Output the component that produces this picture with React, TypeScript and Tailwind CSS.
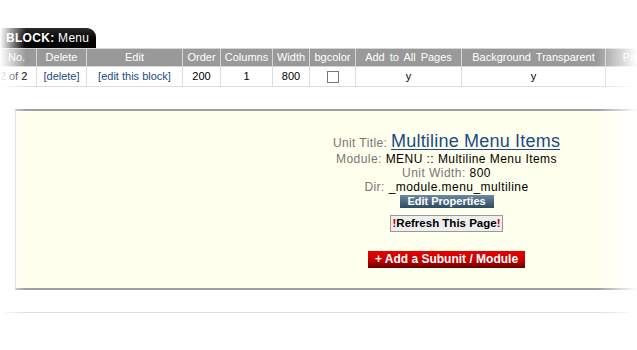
export default function App() {
  const cols = [
    { label: 'No.', w: 40 },
    { label: 'Delete', w: 50 },
    { label: 'Edit', w: 96 },
    { label: 'Order', w: 38 },
    { label: 'Columns', w: 52 },
    { label: 'Width', w: 37 },
    { label: 'bgcolor', w: 46 },
    { label: 'Add to All Pages', w: 106 },
    { label: 'Background Transparent', w: 144 },
    { label: 'Page', w: 60 },
  ];

  return (
    <div className="relative w-[637px] h-[350px] overflow-hidden bg-white font-['Liberation_Sans',Arial,sans-serif]">
      <div className="pt-[28px]">
        {/* block tab */}
        <div className="w-[96px] h-[20px] rounded-tr-[9px] bg-gradient-to-b from-[#2a2a2a] to-black text-white text-[12px] leading-[20px] pl-[6px] tracking-[0.3px]">
          <span className="font-bold">BLOCK:</span> Menu
        </div>

        <table className="ml-[-4px] border-collapse text-[11px] table-fixed w-[669px]">
          <colgroup>
            {cols.map((c) => (
              <col key={c.label} style={{ width: c.w }} />
            ))}
          </colgroup>
          <thead>
            <tr className="h-[18px] bg-[#999999] text-white">
              {cols.map((c) => (
                <th
                  key={c.label}
                  className="font-normal border border-[#d6d6d6] px-0 whitespace-nowrap overflow-hidden [word-spacing:2px]"
                >
                  {c.label}
                </th>
              ))}
            </tr>
          </thead>
          <tbody>
            <tr className="h-[20px] text-center text-black">
              <td className="border border-[#dddddd] pr-[6px]">2 of 2</td>
              <td className="border border-[#dddddd] text-[#1b4a86]">[delete]</td>
              <td className="border border-[#dddddd] text-[#1b4a86]">[edit this block]</td>
              <td className="border border-[#dddddd]">200</td>
              <td className="border border-[#dddddd]">1</td>
              <td className="border border-[#dddddd]">800</td>
              <td className="border border-[#dddddd]">
                <div className="mx-auto w-[12px] h-[12px] border border-[#777] bg-white" />
              </td>
              <td className="border border-[#dddddd]">y</td>
              <td className="border border-[#dddddd]">y</td>
              <td className="border border-[#dddddd]"></td>
            </tr>
          </tbody>
        </table>

        {/* unit box */}
        <div className="ml-[15px] mt-[22px] w-[862px] h-[181px] bg-[#ffffee] border-t-2 border-b-2 border-l border-t-[#a0a0a0] border-b-[#a0a0a0] border-l-[#cccccc] flex flex-col items-center pt-[21px]">
          <div className="text-[12px] text-[#777] leading-[18px] tracking-[0.4px]">
            Unit Title:{' '}
            <a className="text-[18px] text-[#1b4a86] underline underline-offset-2 tracking-[0.2px]">
              Multiline Menu Items
            </a>
          </div>
          <div className="text-[12px] leading-[14px] text-[#777] tracking-[0.45px]">
            Module: <span className="text-black">MENU :: Multiline Menu Items</span>
          </div>
          <div className="text-[12px] leading-[14px] text-[#777] tracking-[0.45px]">
            Unit Width: <span className="text-black">800</span>
          </div>
          <div className="text-[12px] leading-[14px] text-[#777] tracking-[0.45px]">
            Dir: <span className="text-black">_module.menu_multiline</span>
          </div>
          <div className="mt-[1px] w-[94px] h-[13px] bg-gradient-to-b from-[#6d8aa3] to-[#2e4b62] text-white font-bold text-[11px] leading-[13px] text-center">
            Edit Properties
          </div>
          <div className="mt-[7px] h-[17px] px-[1px] bg-[#eeeeee] border border-[#999] font-bold text-[11.5px] leading-[15px] text-center text-black whitespace-nowrap">
            <span className="text-[#cc0000]">!</span>Refresh This Page<span className="text-[#cc0000]">!</span>
          </div>
          <div className="mt-[19px] w-[157px] h-[17px] bg-gradient-to-b from-[#e80000] via-[#cc0000] to-[#6a0000] text-white font-bold text-[12px] leading-[17px] text-center whitespace-nowrap">
            + Add a Subunit / Module
          </div>
        </div>

        <div className="mt-[22px] ml-[4px] w-[626px] h-[1px] bg-[#dddddd]" />
      </div>

      {/* edge fades */}
      <div className="absolute left-0 top-0 h-full w-[26px] bg-gradient-to-r from-white to-transparent pointer-events-none" />
      <div className="absolute right-0 top-0 h-full w-[40px] bg-gradient-to-l from-white to-transparent pointer-events-none" />
    </div>
  );
}
